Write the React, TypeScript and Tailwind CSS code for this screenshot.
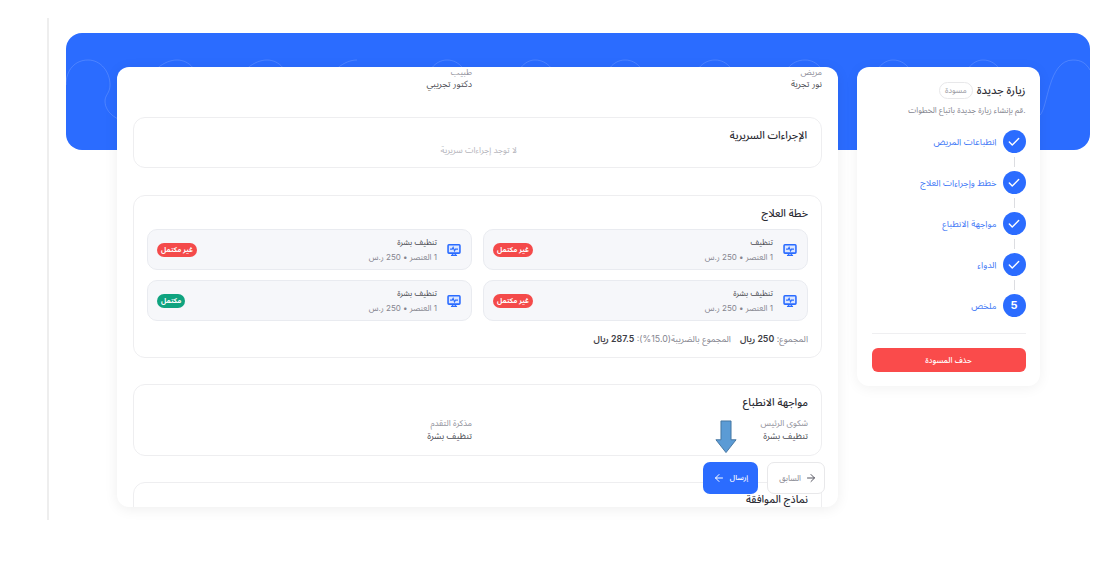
import React from "react";
import { ArrowLeft, ArrowRight, Check } from "lucide-react";

const font = "font-['Inter','Noto_Sans_Arabic','Noto_Sans',sans-serif]";

function MonitorIcon() {
  return (
    <svg width="14" height="14" viewBox="0 0 16 16" className="shrink-0">
      <rect x="1.2" y="2" width="13.6" height="9.6" rx="1" fill="#dbe6ff" stroke="#2b6cff" strokeWidth="1.8" />
      <path d="M3.5 7h2.5l1-2 1.6 4 1-2h3" fill="none" stroke="#2b6cff" strokeWidth="1.3" />
      <path d="M6.5 12v1.6M9.5 12v1.6M4.5 14.2h7" stroke="#2b6cff" strokeWidth="1.4" />
    </svg>
  );
}

function Item({ name, ok }: { name: string; ok?: boolean }) {
  return (
    <div className="flex h-[41px] items-center rounded-[10px] border border-[#e9ebf0] bg-[#f6f7fa] pr-[10px] pl-[9px]">
      <MonitorIcon />
      <div className="mr-[10px] flex-1">
        <div className="text-[8px] leading-[14px] text-[#4a4a52]">{name}</div>
        <div className="mt-[1px] text-[8px] leading-[14px] text-[#85858f]">1 العنصر • 250 ر.س</div>
      </div>
      <span className={`rounded-full px-[4px] text-[7px] leading-[14px] font-bold text-white ${ok ? "bg-[#0fa37f]" : "bg-[#f44a4a]"}`}>
        {ok ? "مكتمل" : "غير مكتمل"}
      </span>
    </div>
  );
}

function Step({ label, n, last }: { label: string; n?: string; last?: boolean }) {
  return (
    <div>
      <div className="flex h-[23px] items-center gap-[6px]">
        <span className="flex h-[23px] w-[23px] items-center justify-center rounded-full bg-[#2b6cff] text-[11px] font-bold text-white">
          {n ?? <Check size={14} strokeWidth={2.4} />}
        </span>
        <span className="text-[9px] text-[#3f78f6]">{label}</span>
      </div>
      {!last && <div className="mr-[11px] my-[4px] h-[10px] w-[1px] bg-[#dcdde1]" />}
    </div>
  );
}

function Field({ label, value }: { label: string; value: string }) {
  return (
    <div>
      <div className="text-[8.5px] leading-[12px] text-[#92929c]">{label}</div>
      <div className="text-[9px] leading-[13px] text-[#4a4a52]">{value}</div>
    </div>
  );
}

function HeadField({ label, value }: { label: string; value: string }) {
  return (
    <div>
      <div className="text-[8.5px] leading-[10px] text-[#92929c]">{label}</div>
      <div className="text-[9px] leading-[13px] text-[#4a4a52]">{value}</div>
    </div>
  );
}

export default function App() {
  return (
    <div className={`relative h-[570px] w-[1120px] overflow-hidden bg-white ${font}`}>
      <div className="absolute top-[18px] left-[47px] h-[502px] w-[2px] bg-[#eeeeee]" />
      <div className="ml-[66px] pt-[33px] w-[1024px]">
        <div className="h-[117px] overflow-hidden rounded-2xl bg-[#2b6cff]">
          <svg width="1024" height="117" viewBox="0 0 1024 117" fill="none">
            <path
              d="M0 52C0 37 9 27 22 27C35 27 44 39 44 52C44 60 39 62 39 68C39 80 52 89 66 89C80 89 88 78 88 68C88 62 83 60 83 52C83 39 98 27 111 27C124 27 133 39 133 52C133 60 128 62 128 68C128 80 141 89 155 89C169 89 178 78 178 68C178 62 173 60 173 52C173 39 188 27 201 27C214 27 223 39 223 52C223 60 218 62 218 68C218 80 231 89 245 89C259 89 268 78 268 68C268 62 263 60 263 52C263 39 278 27 291 27"
              stroke="white"
              strokeOpacity="0.16"
            />
            <path d="M360 52C360 39 369 27 381 27C394 27 402 39 402 52M449 52C449 39 458 27 469 27C482 27 491 39 491 52M538 52C538 39 547 27 559 27C572 27 580 39 580 52M627 52C627 39 636 27 649 27C662 27 670 39 670 52M716 52C716 39 725 27 739 27C752 27 760 39 760 52M807 52C807 39 816 27 827 27C840 27 848 39 848 52M897 52C897 39 906 27 917 27C930 27 938 39 938 52M974 82C982 75 982 27 1007 27C1015 27 1020 30 1024 37M730 89C745 89 755 80 760 68" stroke="white" strokeOpacity="0.16" />
          </svg>
        </div>
      </div>

      <div dir="rtl" className="-mt-[83px] ml-[66px] flex w-[1024px] items-start gap-[19px] pr-[50px]">
        <aside className="relative w-[183px] rounded-[12px] bg-white px-[14.5px] pt-[14px] pb-[14px] shadow-[0_2px_14px_rgba(0,0,0,0.06)]">
          <div className="flex h-[18px] items-center gap-[4px]">
            <h2 className="text-[11px] font-medium text-[#2b2b33]">زيارة جديدة</h2>
            <span className="rounded-full border border-[#e8e8ea] px-[5px] text-[8px] leading-[15px] text-[#9a9aa2]">مسودة</span>
          </div>
          <p className="mt-[4px] text-[8px] leading-[14px] text-[#85858f]">.قم بإنشاء زيارة جديدة باتباع الخطوات</p>
          <div className="mt-[13px]">
            <Step label="انطباعات المريض" />
            <Step label="خطط وإجراءات العلاج" />
            <Step label="مواجهة الانطباع" />
            <Step label="الدواء" />
            <Step label="ملخص" n="5" last />
          </div>
          <div className="mt-[16px] h-[1px] bg-[#efeff1]" />
          <button className="mt-[14px] h-[24px] w-full rounded-[6px] bg-[#fa4b4b] text-[8px] font-medium text-white">حذف المسودة</button>
        </aside>

        <main className="relative h-[440px] w-[721px] rounded-[12px] bg-white shadow-[0_2px_14px_rgba(0,0,0,0.07)]">
          <div className="h-full overflow-hidden rounded-[12px] px-[16px]">
            <div className="grid grid-cols-2 gap-[11px]">
              <HeadField label="مريض" value="نور تجربة" />
              <HeadField label="طبيب" value="دكتور تجريبي" />
            </div>

            <section className="mt-[27px] h-[51px] rounded-[12px] border border-[#eeeef0] px-[14px] pt-[9px]">
              <h3 className="text-[10.5px] leading-[18px] font-medium text-[#2b2b33]">الإجراءات السريرية</h3>
              <p className="-mt-[2px] mr-[290px] text-[8.5px] leading-[14px] text-[#b5b5bc]">لا توجد إجراءات سريرية</p>
            </section>

            <section className="mt-[27px] h-[163px] rounded-[12px] border border-[#eeeef0] px-[13px] pt-[9px]">
              <h3 className="text-[10.5px] leading-[18px] font-medium text-[#2b2b33]">خطة العلاج</h3>
              <div className="mt-[6px] grid grid-cols-2 gap-x-[11px] gap-y-[10px]">
                <Item name="تنظيف" />
                <Item name="تنظيف بشرة" />
                <Item name="تنظيف بشرة" />
                <Item name="تنظيف بشرة" ok />
              </div>
              <div className="mt-[10px] flex gap-[9px] text-[8.8px] leading-[16px] text-[#85858f]">
                <span>المجموع: <b className="font-semibold text-[#3d3d45]">250 ريال</b></span>
                <span>المجموع بالضريبة(15.0%): <b className="font-semibold text-[#3d3d45]">287.5 ريال</b></span>
              </div>
            </section>

            <section className="mt-[26px] h-[72px] rounded-[12px] border border-[#eeeef0] px-[13px] pt-[9px]">
              <h3 className="text-[10.5px] leading-[18px] font-medium text-[#2b2b33]">مواجهة الانطباع</h3>
              <div className="mt-[5px] grid grid-cols-2 gap-[11px]">
                <Field label="شكوى الرئيس" value="تنظيف بشرة" />
                <Field label="مذكرة التقدم" value="تنظيف بشرة" />
              </div>
            </section>

            <section className="mt-[26px] h-[60px] rounded-[12px] border border-[#eeeef0] px-[13px] pt-[8px]">
              <h3 className="text-[10.5px] leading-[18px] font-medium text-[#2b2b33]">نماذج الموافقة</h3>
            </section>
          </div>

          <div className="absolute top-[395px] right-[13px] flex gap-[9px]">
            <button className="flex h-[32px] w-[58px] items-center gap-[4px] rounded-[7px] border border-[#e8e8ea] bg-white pr-[7px] text-[8px] text-[#85858f]">
              <ArrowRight size={12} className="text-[#555560]" />
              السابق
            </button>
            <button className="flex h-[32px] w-[55px] items-center justify-center gap-[5px] rounded-[7px] bg-[#2b6cff] text-[7.5px] font-medium text-white">
              إرسال
              <ArrowLeft size={12} />
            </button>
          </div>
          <svg width="22" height="34" viewBox="0 0 24 36" className="absolute top-[353px] left-[598px]">
            <path d="M6.5 .5H17.5V21H23L12 35L1 21H6.5Z" fill="#5b9bd5" stroke="#41719c" strokeWidth="1" />
          </svg>
        </main>
      </div>
    </div>
  );
}
